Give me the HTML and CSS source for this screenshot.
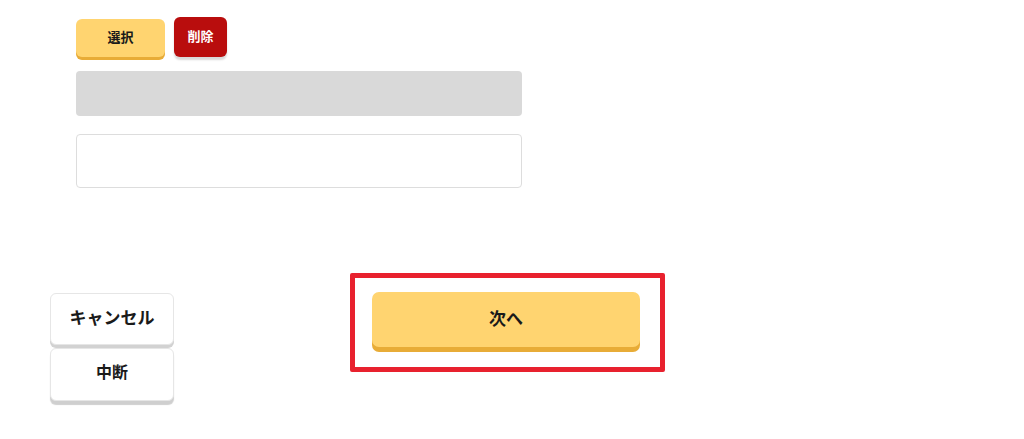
FILE: index.html
```html
<!DOCTYPE html>
<html lang="ja">
<head>
<meta charset="utf-8">
<link rel="stylesheet" href="styles.css">
</head>
<body>
<div class="page">
  <section class="top">
    <div class="btn-row">
      <button class="btn-select">選択</button>
      <button class="btn-delete">削除</button>
    </div>
    <div class="grey-box"></div>
    <div class="input-box"></div>
  </section>
  <section class="bottom">
    <div class="side-buttons">
      <button class="btn-white">キャンセル</button>
      <button class="btn-white btn-second">中断</button>
    </div>
    <div class="frame">
      <button class="btn-next">次へ</button>
    </div>
  </section>
</div>
</body>
</html>
```

FILE: styles.css
```css
html, body {
  margin: 0;
  padding: 0;
  background: #ffffff;
}
body {
  font-family: "Noto Sans CJK JP", "Noto Sans", sans-serif;
  color: #1a1a1a;
}
button {
  font-family: "Noto Sans CJK JP", "Noto Sans", sans-serif;
  font-weight: 700;
  border: none;
  padding: 0;
  cursor: pointer;
}
.page {
  width: 1024px;
  height: 439px;
  overflow: hidden;
}
.top {
  padding: 17px 0 0 76px;
}
.btn-row {
  display: flex;
  align-items: flex-start;
  gap: 9px;
  height: 44px;
}
.btn-select {
  margin-top: 2px;
  width: 89px;
  height: 38px;
  background: #ffd470;
  border-radius: 6px;
  box-shadow: 0 3px 0 #e8ac37;
  font-size: 13px;
  line-height: 1;
  padding-bottom: 4px;
  color: #1a1a1a;
}
.btn-delete {
  width: 53px;
  height: 40px;
  background: #b90d0d;
  border-radius: 6px;
  box-shadow: 0 3px 2px rgba(0, 0, 0, 0.15);
  font-size: 13px;
  line-height: 1;
  padding-bottom: 4px;
  color: #ffffff;
}
.grey-box {
  margin-top: 10px;
  width: 446px;
  height: 45px;
  background: #d9d9d9;
  border-radius: 4px;
}
.input-box {
  margin-top: 18px;
  width: 444px;
  height: 52px;
  border: 1px solid #dddddd;
  border-radius: 4px;
  background: #ffffff;
}
.bottom {
  display: flex;
  align-items: flex-start;
  padding: 85px 0 0 50px;
}
.side-buttons {
  display: flex;
  flex-direction: column;
  margin-top: 20px;
  width: 124px;
}
.btn-white {
  width: 124px;
  height: 52px;
  background: #ffffff;
  border: 1px solid #e6e6e6;
  border-radius: 6px;
  box-shadow: 0 3px 0 #d2d2d2;
  font-size: 17px;
  line-height: 1;
  padding-bottom: 5px;
  color: #1a1a1a;
}
.btn-second {
  margin-top: 3px;
  height: 53px;
  font-size: 16px;
  padding-bottom: 8px;
  box-shadow: 0 4px 1px #cfcfcf;
}
.frame {
  margin-left: 176px;
  border: 5px solid #e8212e;
  border-radius: 2px;
  padding: 14px 0 0 17px;
  box-sizing: content-box;
  width: 288px;
  height: 75px;
}
.btn-next {
  width: 268px;
  height: 55px;
  background: #ffd470;
  border-radius: 7px;
  box-shadow: 0 5px 0 #e8ac37;
  font-size: 17px;
  line-height: 1;
  padding-bottom: 4px;
  color: #1a1a1a;
}
```
